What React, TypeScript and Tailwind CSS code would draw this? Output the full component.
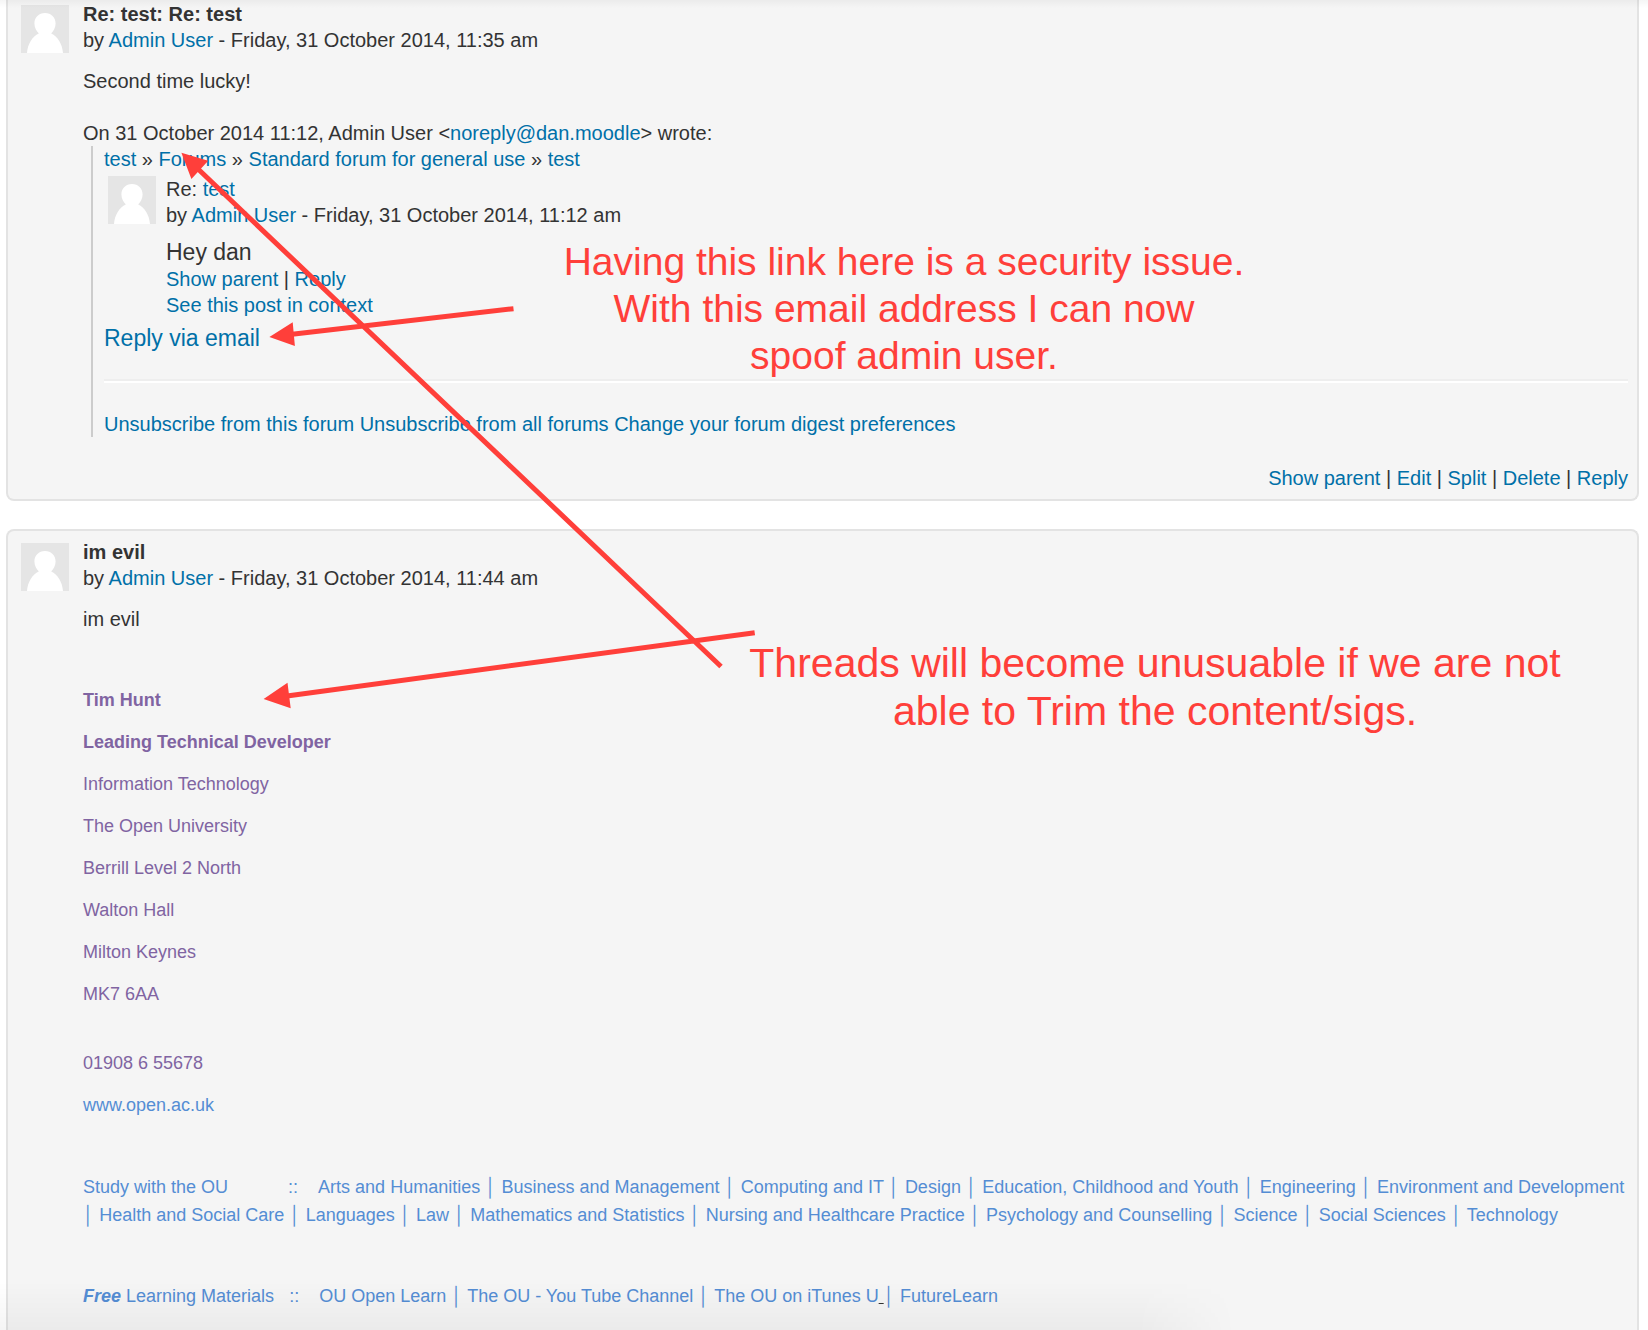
import React from "react";

const font = "font-['Liberation_Sans',Arial,sans-serif]";

function Avatar({ className = "" }: { className?: string }) {
  return (
    <svg
      viewBox="0 0 48 48"
      className={"h-12 w-12 shrink-0 " + className}
      role="img"
      aria-label="Picture of Admin User"
    >
      <rect width="48" height="48" fill="#e5e5e5" />
      <path
        d="M24 8C30.2 8 34.6 12.5 34.6 18.4C34.6 22.6 32.4 26 30.2 28.4C36.6 31 41.4 39 42 48H6C6.6 39 11.4 31 17.8 28.4C15.6 26 13.4 22.6 13.4 18.4C13.4 12.5 17.8 8 24 8Z"
        fill="#fff"
      />
    </svg>
  );
}

function Link({ children, className = "text-[#0070a8]" }: { children: React.ReactNode; className?: string }) {
  return (
    <a href="#" className={"hover:underline " + className}>
      {children}
    </a>
  );
}

function Commands({ items }: { items: string[] }) {
  return (
    <>
      {items.map((item, i) => (
        <React.Fragment key={item}>
          {i > 0 && " | "}
          <Link>{item}</Link>
        </React.Fragment>
      ))}
    </>
  );
}

function LinkBar({ items }: { items: string[] }) {
  return (
    <>
      {items.map((item, i) => (
        <React.Fragment key={item}>
          {i > 0 && " │ "}
          <Link className="text-[#548dd4]">{item}</Link>
        </React.Fragment>
      ))}
    </>
  );
}

const address = [
  "Information Technology",
  "The Open University",
  "Berrill Level 2 North",
  "Walton Hall",
  "Milton Keynes",
  "MK7 6AA",
];

const subjects = [
  "Arts and Humanities",
  "Business and Management",
  "Computing and IT",
  "Design",
  "Education, Childhood and Youth",
  "Engineering",
  "Environment and Development",
  "Health and Social Care",
  "Languages",
  "Law",
  "Mathematics and Statistics",
  "Nursing and Healthcare Practice",
  "Psychology and Counselling",
  "Science",
  "Social Sciences",
  "Technology",
];

function Byline({ time }: { time: string }) {
  return (
    <p>
      by <Link>Admin User</Link> - Friday, 31 October 2014, {time}
    </p>
  );
}

function Annotations() {
  return (
    <div className="pointer-events-none absolute inset-0 overflow-hidden text-center text-[#ff3f3a]">
      <svg
        viewBox="0 0 1648 1330"
        className="absolute left-0 top-0 h-[1330px] w-[1648px]"
        fill="currentColor"
        stroke="currentColor"
        aria-hidden="true"
      >
        <path d="M513.5 308.7L290 334.6M721 666.5L197 168M754.7 632.7L287 696" strokeWidth="5" fill="none" />
        <path
          d="M269.4 337L292.7 322.3L294.9 346ZM181.4 152.7L208.2 160.7L191.4 179ZM263.6 699L287.5 682.7L290.7 708.3Z"
          stroke="none"
        />
      </svg>
      <p className="absolute left-[554px] top-[238px] w-[700px] text-[39px] leading-[47px]">
        Having this link here is a security issue.
        <br />
        With this email address I can now
        <br />
        spoof admin user.
      </p>
      <p className="absolute left-[735px] top-[639px] w-[840px] text-[41px] leading-[48px]">
        Threads will become unusuable if we are not
        <br />
        able to Trim the content/sigs.
      </p>
    </div>
  );
}

export default function App() {
  return (
    <main
      className={
        "relative flex min-h-screen flex-col gap-7 bg-white pl-1.5 pr-[9px] text-[20px] leading-[26px] text-[#333] " + font
      }
    >
      <article className="flex rounded-b-lg border-2 border-t-0 border-[#e3e3e3] bg-[#f5f5f5] pb-2 pl-[13px] pr-[9px] pt-px">
        <Avatar className="mt-1" />
        <div className="ml-3.5 min-w-0 flex-1">
          <h2 className="font-bold">Re: test: Re: test</h2>
          <Byline time="11:35 am" />
          <p className="mt-[15px]">Second time lucky!</p>
          <p className="mt-[26px]">
            On 31 October 2014 11:12, Admin User &lt;<Link>noreply@dan.moodle</Link>&gt; wrote:
          </p>
          <blockquote className="ml-2 border-l-2 border-[#ccc] pl-[11px]">
            <nav aria-label="Breadcrumb">
              <Link>test</Link> » <Link>Forums</Link> » <Link>Standard forum for general use</Link> » <Link>test</Link>
            </nav>
            <div className="mt-1 flex pl-1">
              <Avatar />
              <div className="ml-2.5">
                <p>
                  Re: <Link>test</Link>
                </p>
                <Byline time="11:12 am" />
                <p className="mt-[11px] text-[23px] leading-[27px]">Hey dan</p>
                <p>
                  <Commands items={["Show parent", "Reply"]} />
                </p>
                <p>
                  <Link>See this post in context</Link>
                </p>
              </div>
            </div>
            <p className="mt-[7px] text-[23px] leading-[27px]">
              <Link>Reply via email</Link>
            </p>
            <hr className="mb-7 mt-[27px] h-1 border-b-2 border-t-2 border-b-white border-t-[#eee]" />
            <p>
              <Link>Unsubscribe from this forum</Link> <Link>Unsubscribe from all forums</Link>{" "}
              <Link>Change your forum digest preferences</Link>
            </p>
          </blockquote>
          <p className="mt-7 text-right">
            <Commands items={["Show parent", "Edit", "Split", "Delete", "Reply"]} />
          </p>
        </div>
      </article>

      <article className="flex flex-1 rounded-t-lg border-2 border-b-0 border-[#e3e3e3] bg-[#f5f5f5] pl-[13px] pr-[9px] pt-2">
        <Avatar className="mt-1" />
        <div className="ml-3.5 min-w-0 flex-1 pb-5">
          <h2 className="font-bold">im evil</h2>
          <Byline time="11:44 am" />
          <p className="mt-[15px]">im evil</p>
          <div className="mt-[54px] text-[18px] leading-[28px] text-[#8064a2]">
            <div className="flex flex-col gap-3.5">
              <p className="font-bold">Tim Hunt</p>
              <p className="font-bold">Leading Technical Developer</p>
              {address.map((line) => (
                <p key={line}>{line}</p>
              ))}
            </div>
            <p className="mt-[41px]">01908 6 55678</p>
            <p className="mt-3.5">
              <Link className="text-[#548dd4]">www.open.ac.uk</Link>
            </p>
            <p className="mt-[54px] text-[#548dd4]">
              <Link className="text-[#548dd4]">Study with the OU</Link>
              <span className="ml-[60px] mr-5">::</span>
              <LinkBar items={subjects} />
            </p>
            <p className="mt-[53px] text-[#548dd4]">
              <Link className="text-[#548dd4]">
                <strong className="italic">Free</strong> Learning Materials
              </Link>
              <span className="ml-[15px] mr-5">::</span>
              <LinkBar items={["OU Open Learn", "The OU - You Tube Channel", "The OU on iTunes U"]} />
              <span className="text-[#333] underline">&nbsp;</span>
              {"│ "}
              <Link className="text-[#548dd4]">FutureLearn</Link>
            </p>
          </div>
        </div>
      </article>

      <div className="pointer-events-none absolute inset-x-0 top-0 h-2 bg-linear-to-b from-black/4 to-transparent" />
      <div className="pointer-events-none absolute bottom-0 left-0 h-12 w-3/4 bg-linear-to-b from-transparent to-black/4 mask-r-from-92%" />
      <Annotations />
    </main>
  );
}
